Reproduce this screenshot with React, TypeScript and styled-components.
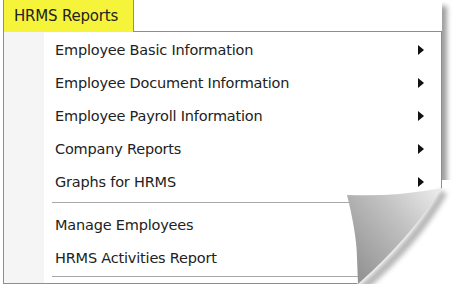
import styled, { createGlobalStyle } from "styled-components";

const GlobalStyle = createGlobalStyle`
  html, body {
    margin: 0;
    padding: 0;
    background: #ffffff;
  }
  body {
    font-family: "DejaVu Sans", Tahoma, sans-serif;
    color: #222222;
  }
`;

const Frame = styled.div`
  position: relative;
  width: 442px;
  height: 284px;
  padding-left: 3px;
  box-sizing: border-box;
  background: #ffffff;
  box-shadow: 5px 6px 5px rgba(0, 0, 0, 0.38);
  display: flex;
  flex-direction: column;
`;

const Tab = styled.div`
  position: relative;
  z-index: 1;
  width: 131px;
  height: 32px;
  margin-bottom: -1px;
  box-sizing: border-box;
  background: #f6f43a;
  border-left: 1px solid #8e8e8e;
  border-right: 1px solid #8e8e8e;
  display: flex;
  align-items: center;
  padding-left: 10px;
  font-size: 15px;
  letter-spacing: -0.2px;
`;

const Panel = styled.div`
  flex: 1;
  box-sizing: border-box;
  border: 1px solid #8e8e8e;
  background: linear-gradient(to right, #f5f5f5 0 40px, #ffffff 40px);
  padding: 1px 0 0 0;
  display: flex;
  flex-direction: column;
`;

const Item = styled.div`
  height: 33px;
  display: flex;
  align-items: center;
  justify-content: space-between;
  padding: 0 17px 0 51px;
  font-size: 14.5px;
  letter-spacing: -0.2px;
`;

const Arrow = styled.span`
  width: 0;
  height: 0;
  border-left: 6px solid #111;
  border-top: 5px solid transparent;
  border-bottom: 5px solid transparent;
`;

const Separator = styled.div<{ gap: number }>`
  margin: ${({ gap }) => gap}px 6px ${({ gap }) => gap}px 48px;
  height: 1px;
  background: #a8a8a8;
  border-bottom: 1px solid #ffffff;
`;

const Curl = styled.svg`
  position: absolute;
  left: 330px;
  top: 170px;
  width: 127px;
  height: 130px;
  pointer-events: none;
`;

const subMenus = [
  "Employee Basic Information",
  "Employee Document Information",
  "Employee Payroll Information",
  "Company Reports",
  "Graphs for HRMS",
];

const actions = ["Manage Employees", "HRMS Activities Report"];

const PageCurl = () => (
  <Curl viewBox="330 170 127 130">
    <defs>
      <linearGradient id="curlFill" x1="442" y1="188" x2="350" y2="262" gradientUnits="userSpaceOnUse">
        <stop offset="0" stopColor="#eeeeee" />
        <stop offset="0.45" stopColor="#c2c2c2" />
        <stop offset="1" stopColor="#959595" />
      </linearGradient>
      <filter id="curlBlur" x="-20%" y="-20%" width="140%" height="140%">
        <feGaussianBlur stdDeviation="2.5" />
      </filter>
    </defs>
    <path d="M442 180 L457 180 L457 300 L345 300 L357 284 L442 188 Z" fill="#ffffff" />
    <path
      d="M441 190 Q412 240 358 287 L363 293 Q418 246 447 194 Z"
      fill="#444"
      opacity="0.4"
      filter="url(#curlBlur)"
    />
    <path
      d="M347 195 Q395 197 442 188 Q410 238 358 284 L357 258 C357 240 352 215 347 195 Z"
      fill="url(#curlFill)"
    />
  </Curl>
);

const App = () => {
  return (
    <>
      <GlobalStyle />
      <Frame>
        <Tab>HRMS Reports</Tab>
        <Panel>
          {subMenus.map((label) => (
            <Item key={label}>
              {label}
              <Arrow />
            </Item>
          ))}
          <Separator gap={4} />
          {actions.map((label) => (
            <Item key={label}>{label}</Item>
          ))}
          <Separator gap={2} />
        </Panel>
        <PageCurl />
      </Frame>
    </>
  );
};

export default App;
